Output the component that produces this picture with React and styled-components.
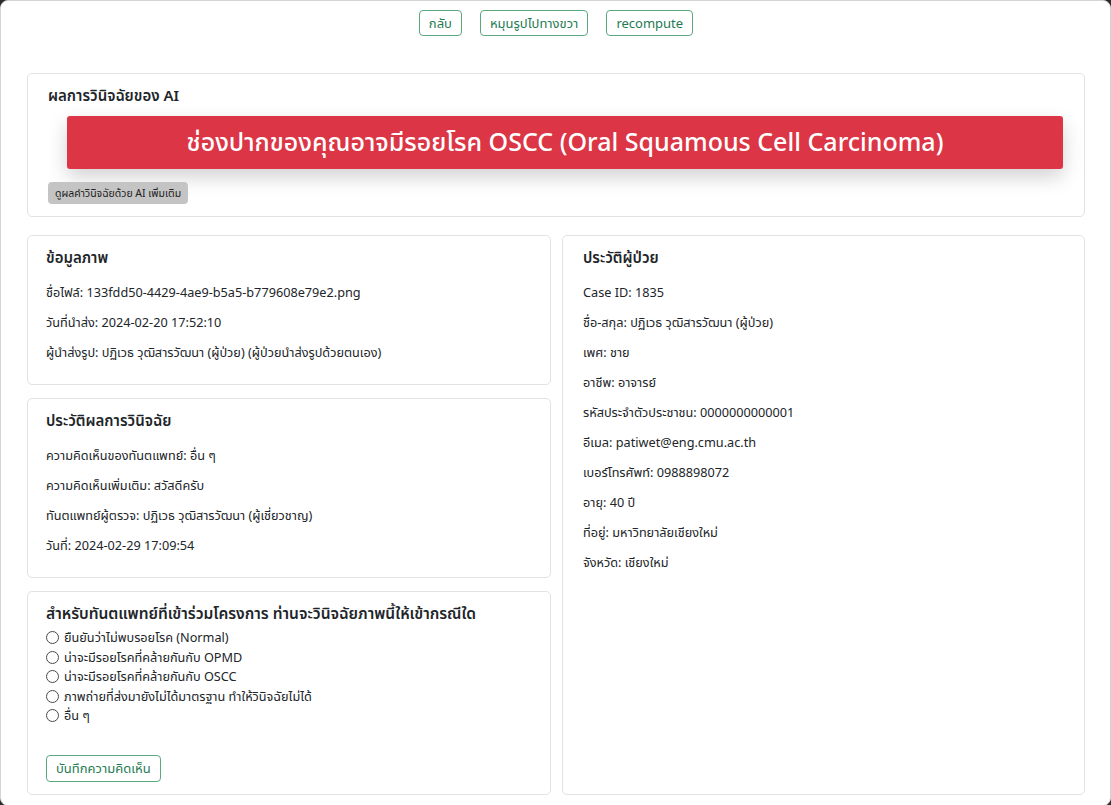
import styled, { createGlobalStyle } from 'styled-components'

const GlobalStyle = createGlobalStyle`
  html, body {
    margin: 0;
    padding: 0;
    background: #2b2b2b;
  }
  body {
    font-family: "Noto Sans", "Noto Sans Thai", "Open Sans", sans-serif;
    color: #212529;
  }
`;

const Page = styled.div`
  box-sizing: border-box;
  width: 1111px;
  min-height: 805px;
  background: #fff;
  border: 1px solid #d4d4d4;
  border-radius: 8px;
  padding: 9px 25px 10px 26px;
  overflow: hidden;
`;

const Toolbar = styled.div`
  display: flex;
  justify-content: center;
  gap: 18px;
  margin-bottom: 37px;
`;

const OutlineButton = styled.button`
  font-family: inherit;
  font-size: 13px;
  line-height: 18px;
  padding: 3px 9px;
  color: #1f7a52;
  background: #fff;
  border: 1px solid #5aa97f;
  border-radius: 4px;
  cursor: pointer;
`;

const Card = styled.div`
  box-sizing: border-box;
  display: flex;
  flex-direction: column;
  background: #fff;
  border: 1px solid #e2e2e2;
  border-radius: 5px;
  padding: 12px 20px 12px ${p => p.$padLeft || 20}px;
`;

const CardTitle = styled.div`
  font-size: ${p => p.$size || 15}px;
  font-weight: 600;
  line-height: 18px;
  margin-bottom: ${p => p.$gap ?? 16}px;
`;

const Banner = styled.div`
  margin: 0 1px 0 19px;
  height: 53px;
  display: flex;
  align-items: center;
  justify-content: center;
  background: #dc3545;
  color: #fff;
  font-size: 25px;
  font-weight: 500;
  border-radius: 3px;
  box-shadow: 0 8px 20px rgba(0, 0, 0, 0.18);
`;

const GreyButton = styled.button`
  align-self: flex-start;
  margin-top: 13px;
  font-family: inherit;
  font-size: 10.5px;
  line-height: 14px;
  padding: 4px 7px;
  color: #222;
  background: #c4c4c4;
  border: none;
  border-radius: 4px;
`;

const Columns = styled.div`
  display: grid;
  grid-template-columns: 524px 523px;
  gap: 11px;
  margin-top: 18px;
  align-items: stretch;
`;

const Stack = styled.div`
  display: flex;
  flex-direction: column;
  gap: 13px;
`;

const Line = styled.p`
  margin: 0 0 10px;
  font-size: 12.7px;
  line-height: 20px;
`;

const RadioList = styled.div`
  display: flex;
  flex-direction: column;
  margin-top: 6px;
`;

const RadioRow = styled.label`
  display: flex;
  align-items: center;
  gap: 5px;
  font-size: 12.7px;
  line-height: 19.5px;
`;

const Radio = styled.span`
  box-sizing: border-box;
  width: 13px;
  height: 13px;
  border: 1px solid #4a4a4a;
  border-radius: 50%;
  flex-shrink: 0;
`;

const SaveButton = styled(OutlineButton)`
  align-self: flex-start;
  margin-top: 29px;
  padding: 4px 9px;
  line-height: 17px;
`;

const imageInfo = [
  'ชื่อไฟล์: 133fdd50-4429-4ae9-b5a5-b779608e79e2.png',
  'วันที่นำส่ง: 2024-02-20 17:52:10',
  'ผู้นำส่งรูป: ปฏิเวธ วุฒิสารวัฒนา (ผู้ป่วย) (ผู้ป่วยนำส่งรูปด้วยตนเอง)',
];

const history = [
  'ความคิดเห็นของทันตแพทย์: อื่น ๆ',
  'ความคิดเห็นเพิ่มเติม: สวัสดีครับ',
  'ทันตแพทย์ผู้ตรวจ: ปฏิเวธ วุฒิสารวัฒนา (ผู้เชี่ยวชาญ)',
  'วันที่: 2024-02-29 17:09:54',
];

const choices = [
  'ยืนยันว่าไม่พบรอยโรค (Normal)',
  'น่าจะมีรอยโรคที่คล้ายกันกับ OPMD',
  'น่าจะมีรอยโรคที่คล้ายกันกับ OSCC',
  'ภาพถ่ายที่ส่งมายังไม่ได้มาตรฐาน ทำให้วินิจฉัยไม่ได้',
  'อื่น ๆ',
];

const patient = [
  'Case ID: 1835',
  'ชื่อ-สกุล: ปฏิเวธ วุฒิสารวัฒนา (ผู้ป่วย)',
  'เพศ: ชาย',
  'อาชีพ: อาจารย์',
  'รหัสประจำตัวประชาชน: 0000000000001',
  'อีเมล: patiwet@eng.cmu.ac.th',
  'เบอร์โทรศัพท์: 0988898072',
  'อายุ: 40 ปี',
  'ที่อยู่: มหาวิทยาลัยเชียงใหม่',
  'จังหวัด: เชียงใหม่',
];

export default function App() {
  return (
    <>
      <GlobalStyle />
      <Page>
        <Toolbar>
          <OutlineButton>กลับ</OutlineButton>
          <OutlineButton>หมุนรูปไปทางขวา</OutlineButton>
          <OutlineButton>recompute</OutlineButton>
        </Toolbar>

        <Card>
          <CardTitle $size={15} $gap={12}>ผลการวินิจฉัยของ AI</CardTitle>
          <Banner>ช่องปากของคุณอาจมีรอยโรค OSCC (Oral Squamous Cell Carcinoma)</Banner>
          <GreyButton>ดูผลคำวินิจฉัยด้วย AI เพิ่มเติม</GreyButton>
        </Card>

        <Columns>
          <Stack>
            <Card $padLeft={18}>
              <CardTitle>ข้อมูลภาพ</CardTitle>
              {imageInfo.map(t => <Line key={t}>{t}</Line>)}
            </Card>
            <Card $padLeft={18}>
              <CardTitle>ประวัติผลการวินิจฉัย</CardTitle>
              {history.map(t => <Line key={t}>{t}</Line>)}
            </Card>
            <Card $padLeft={18}>
              <CardTitle $size={15.5} $gap={0}>สำหรับทันตแพทย์ที่เข้าร่วมโครงการ ท่านจะวินิจฉัยภาพนี้ให้เข้ากรณีใด</CardTitle>
              <RadioList>
                {choices.map(c => (
                  <RadioRow key={c}>
                    <Radio />
                    {c}
                  </RadioRow>
                ))}
              </RadioList>
              <SaveButton>บันทึกความคิดเห็น</SaveButton>
            </Card>
          </Stack>
          <Card>
            <CardTitle>ประวัติผู้ป่วย</CardTitle>
            {patient.map(t => <Line key={t}>{t}</Line>)}
          </Card>
        </Columns>
      </Page>
    </>
  )
}
